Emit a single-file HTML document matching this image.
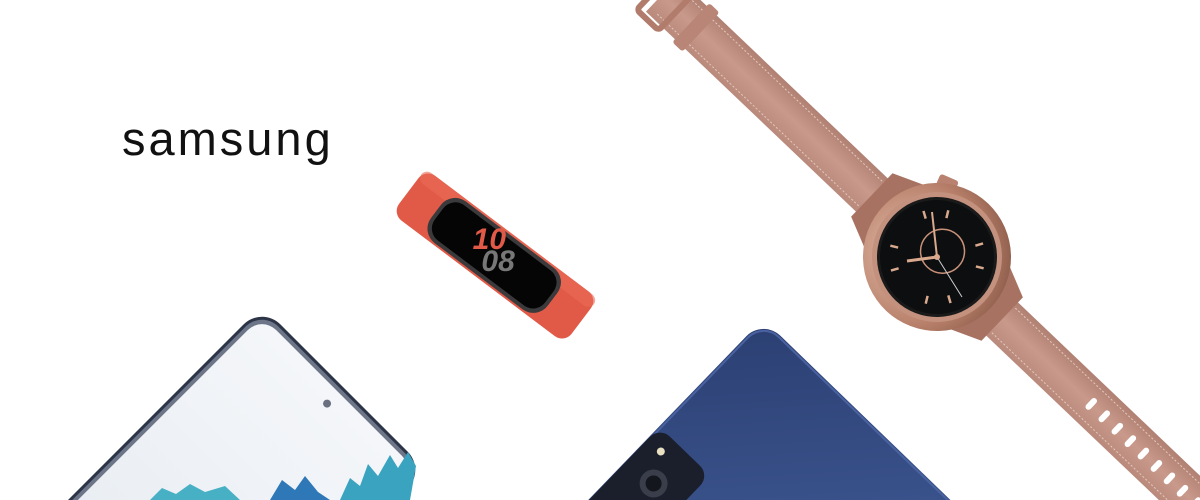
<!DOCTYPE html>
<html><head><meta charset="utf-8"><style>
html,body{margin:0;padding:0;background:#fff;width:1200px;height:500px;overflow:hidden;position:relative}
.t{position:absolute;left:122px;top:111px;font-family:"Liberation Sans",sans-serif;font-size:47px;color:#111;letter-spacing:3px;line-height:56px}
svg{position:absolute;left:0;top:0;display:block}
</style></head><body>
<svg width="1200" height="500" viewBox="0 0 1200 500">
<defs>
<linearGradient id="scr" x1="0" y1="0" x2="0" y2="1"><stop offset="0" stop-color="#f4f6f9"/><stop offset="1" stop-color="#e4eaf1"/></linearGradient>
<linearGradient id="nav" x1="0" y1="0" x2="1" y2="1"><stop offset="0" stop-color="#2b3f72"/><stop offset="0.5" stop-color="#3d5791"/><stop offset="1" stop-color="#23366a"/></linearGradient>
<linearGradient id="strap" x1="0" y1="0" x2="1" y2="0"><stop offset="0" stop-color="#b98a7c"/><stop offset="0.5" stop-color="#c99a8b"/><stop offset="1" stop-color="#b08072"/></linearGradient>
<radialGradient id="bz" cx="0.4" cy="0.35" r="0.7"><stop offset="0" stop-color="#e7c2b0"/><stop offset="0.7" stop-color="#b8806a"/><stop offset="1" stop-color="#8e5e4c"/></radialGradient>
</defs>

<g transform="translate(262,306) rotate(45)">
<rect x="0" y="0" width="232" height="420" rx="26" fill="#2c3447"/>
<rect x="3" y="3" width="226" height="414" rx="23" fill="#6d7688"/>
<rect x="7" y="7" width="218" height="406" rx="20" fill="url(#scr)"/>
<circle cx="115" cy="23" r="4" fill="#6b7080"/>
</g>
<g>
<path d="M340 500 L350 478 L360 486 L368 464 L378 476 L390 455 L398 468 L408 452 L416 466 L410 500 Z" fill="#3aa3bf"/>
<path d="M270 500 L282 480 L295 490 L305 476 L318 492 L330 500 Z" fill="#2f78b8"/>
<path d="M150 500 L162 488 L176 494 L190 484 L205 492 L225 486 L240 500 Z" fill="#48b0c4"/>
</g>

<g transform="translate(763,319) rotate(44)">
<rect x="0" y="0" width="330" height="360" rx="24" fill="url(#nav)"/>
<rect x="2" y="2" width="326" height="356" rx="22" fill="none" stroke="#4a62a0" stroke-width="2"/>
</g>
<g transform="translate(650,480) rotate(44)">
<rect x="-30" y="-45" width="70" height="120" rx="14" fill="#1b1f2c"/>
<circle cx="5" cy="0" r="14" fill="#3a3e4a"/><circle cx="5" cy="0" r="8" fill="#14161d"/>
<circle cx="-12" cy="-28" r="4" fill="#e8e0c0"/>
</g>

<g transform="translate(495,256) rotate(37)">
<rect x="-108" y="-28" width="216" height="56" rx="12" fill="#e15a47"/>
<rect x="-108" y="-28" width="216" height="14" rx="8" fill="#ea6a56" opacity="0.6"/>
<rect x="-74" y="-26" width="146" height="52" rx="18" fill="#3a3a3c"/>
<rect x="-70" y="-22" width="138" height="44" rx="15" fill="#050505"/>
<text x="-28" y="10" font-family="Liberation Sans,sans-serif" font-size="30" font-weight="bold" font-style="italic" fill="#e15a47" transform="rotate(-37 -28 0)">10</text>
<text x="-8" y="22" font-family="Liberation Sans,sans-serif" font-size="30" font-weight="bold" font-style="italic" fill="#777" transform="rotate(-37 -8 12)">08</text>
</g>

<g transform="translate(937,257) rotate(-46.4)">
<rect x="-23" y="-380" width="46" height="300" fill="url(#strap)"/>
<rect x="-23" y="70" width="46" height="330" fill="url(#strap)"/>
<line x1="-17" y1="-370" x2="-17" y2="-80" stroke="#e4c8bc" stroke-width="1" stroke-dasharray="2 2"/>
<line x1="17" y1="-370" x2="17" y2="-80" stroke="#e4c8bc" stroke-width="1" stroke-dasharray="2 2"/>
<line x1="-17" y1="80" x2="-17" y2="390" stroke="#e4c8bc" stroke-width="1" stroke-dasharray="2 2"/>
<line x1="17" y1="80" x2="17" y2="390" stroke="#e4c8bc" stroke-width="1" stroke-dasharray="2 2"/>
<rect x="-27" y="-340" width="54" height="14" rx="3" fill="#b88576"/>
<rect x="-28" y="-388" width="56" height="30" rx="4" fill="none" stroke="#b27c6c" stroke-width="6"/>
<g fill="#fff">
<rect x="-7" y="210" width="14" height="6" rx="3"/><rect x="-7" y="228" width="14" height="6" rx="3"/><rect x="-7" y="246" width="14" height="6" rx="3"/><rect x="-7" y="264" width="14" height="6" rx="3"/><rect x="-7" y="282" width="14" height="6" rx="3"/><rect x="-7" y="300" width="14" height="6" rx="3"/><rect x="-7" y="318" width="14" height="6" rx="3"/><rect x="-7" y="336" width="14" height="6" rx="3"/><rect x="-7" y="354" width="14" height="6" rx="3"/><rect x="-7" y="372" width="14" height="6" rx="3"/>
</g>
<path d="M-45 -55 L-30 -90 L30 -90 L45 -55 Z" fill="#a87262"/>
<path d="M-45 55 L-30 90 L30 90 L45 55 Z" fill="#a87262"/>
<rect x="64" y="-30" width="14" height="20" rx="3" fill="#b98270" transform="rotate(-20)"/>
<circle r="74" fill="url(#bz)"/>
<circle r="65" fill="#c3917e"/>
<circle r="60" fill="#1a1a1a"/>
<circle r="57" fill="#0d0e10"/>
<g stroke="#d9a98e" stroke-width="2.5">
<line x1="0" y1="-48" x2="0" y2="-40" transform="rotate(30)"/><line x1="0" y1="-48" x2="0" y2="-40" transform="rotate(60)"/><line x1="0" y1="-48" x2="0" y2="-40" transform="rotate(120)"/><line x1="0" y1="-48" x2="0" y2="-40" transform="rotate(150)"/><line x1="0" y1="-48" x2="0" y2="-40" transform="rotate(210)"/><line x1="0" y1="-48" x2="0" y2="-40" transform="rotate(240)"/><line x1="0" y1="-48" x2="0" y2="-40" transform="rotate(300)"/><line x1="0" y1="-48" x2="0" y2="-40" transform="rotate(330)"/>
</g>
<circle r="22" cx="8" cy="0" fill="none" stroke="#c99279" stroke-width="1.5"/>
<g transform="rotate(46.4)">
<line x1="0" y1="0" x2="-30" y2="4" stroke="#d9a98e" stroke-width="3"/>
<line x1="0" y1="0" x2="-5" y2="-45" stroke="#d9a98e" stroke-width="2"/>
<line x1="0" y1="0" x2="25" y2="40" stroke="#ccc" stroke-width="1"/>
</g>
<circle r="3" fill="#d9a98e"/>
</g>
</svg>
<div class="t">samsung</div>
</body></html>
